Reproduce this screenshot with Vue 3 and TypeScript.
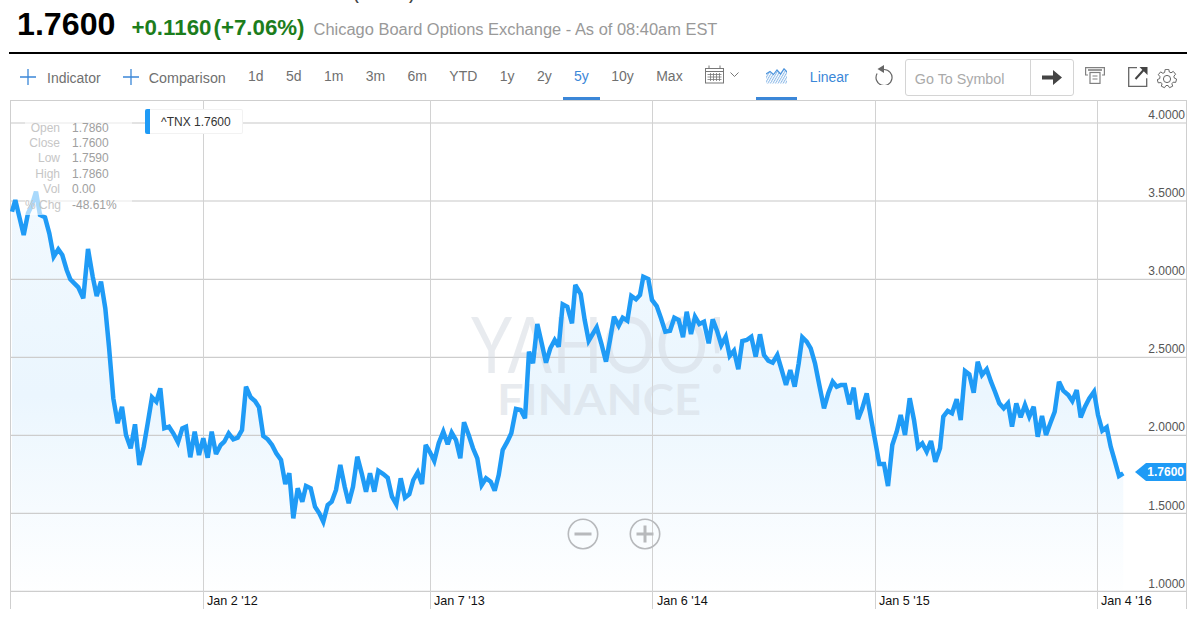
<script setup lang="ts">
const ranges = ['1d', '5d', '1m', '3m', '6m', 'YTD', '1y', '2y', '5y', '10y', 'Max']
const ohlc = [
  ['Open', '1.7860'],
  ['Close', '1.7600'],
  ['Low', '1.7590'],
  ['High', '1.7860'],
  ['Vol', '0.00'],
  ['% Chg', '-48.61%'],
]
const topLines = [123, 201]
const hLines = [279, 357, 435, 513, 591]
const vLines = [203.5, 430.5, 652.5, 875.5, 1097.5]
const yLabels = [
  ['4.0000', 119], ['3.5000', 197], ['3.0000', 275], ['2.5000', 353],
  ['2.0000', 431], ['1.5000', 510], ['1.0000', 588],
] as [string, number][]
const xLabels = [
  ["Jan 2 '12", 207], ["Jan 7 '13", 434], ["Jan 6 '14", 657], ["Jan 5 '15", 879], ["Jan 4 '16", 1101],
] as [string, number][]

type Seg = { ox: number; oy: number; p: number[] }
const segs: Seg[] = [
  { ox: 0, oy: 180, p: [36,95,46,60,58,110,71,165,84,100,96,75,108,35,120,105,135,112,148,160,161,230,175,208,187,225,200,270,211,298,235,322,250,355,264,207,278,290,290,348,303,305,316,385,327,500,340,655,353,730,366,680,378,765,392,805,405,733,418,855,431,800,443,730,456,652,469,665,481,625,493,745,507,740,520,760,534,787,547,745,558,740,571,832,584,755,597,825,610,775,623,833,635,755,648,822,662,795,673,785,686,760,700,778,713,773,726,750,738,620,752,652,765,663,777,682,790,768,803,778,816,795,829,820,843,840,856,912,868,880] },
  { ox: 280, oy: 260, p: [40,775,53,685,67,725,78,678,92,685,105,740,118,760,130,785,143,735,155,725,168,690,181,615,194,680,206,730,219,680,232,590,245,640,258,695,270,640,283,695,295,632,310,642,323,653,336,710,349,733,362,655,375,713,388,703,400,660,413,637,426,672,437,555,450,577,463,603,476,550,490,515,503,553,515,518,528,540,541,595,552,487,566,525,579,565,592,595,605,675,618,655,632,665,644,692,656,645,668,570,682,545,694,520,708,447,722,450,735,475,747,275,759,310,772,192,785,250,798,308,811,265,824,240,836,260] },
  { ox: 560, oy: 260, p: [8,133,22,140,36,190,46,75,62,102,74,180,86,242,110,202,124,250,138,305,150,240,162,170,176,197,188,173,202,182,214,108,228,118,240,105,250,50,265,57,276,120,290,138,303,175,316,215,330,212,343,173,356,180,369,232,380,155,393,222,405,170,418,192,432,185,446,250,458,178,471,212,484,255,497,230,509,288,522,272,535,328,547,243,560,240,574,230,587,290,600,223,612,285,625,302,638,308,652,285,665,330,678,375,691,330,704,380,716,310,727,232,740,245,752,265,765,310,778,375,792,445,805,400,818,365,830,380,843,375,855,375,868,433,881,383,894,478,907,445] },
  { ox: 860, oy: 340, p: [20,160,33,235,46,305,58,372,72,372,84,438,97,315,110,275,122,225,135,285,149,175,162,240,174,322,187,310,200,335,213,303,226,365,240,325,250,230,263,213,276,220,290,178,302,240,315,93,328,103,341,158,353,65,366,105,380,88,393,125,405,155,418,190,431,205,444,190,456,260,469,190,482,232,495,195,508,230,521,200,533,290,546,228,558,285,571,250,584,215,597,125,610,152,625,165,637,183,650,150,662,232,675,200,688,175,702,155,714,225,727,272,740,262,752,320,765,365,777,408,790,400] },
]
const pts: string[] = []
for (const s of segs) {
  for (let i = 0; i < s.p.length; i += 2) {
    pts.push(`${(s.ox + s.p[i] / 3).toFixed(1)},${(s.oy + s.p[i + 1] / 3).toFixed(1)}`)
  }
}
const line = pts.join(' ')
const area = `M12,608 L${pts.join(' L')} L1123.3,608 Z`
</script>

<template>
  <div class="page">
    <div class="clipped"><span>(^TNX)</span></div>
    <div class="quote">
      <span class="price">1.7600</span>
      <span class="change">+0.1160</span>
      <span class="pct">(+7.06%)</span>
      <span class="source">Chicago Board Options Exchange - As of 08:40am EST</span>
    </div>
    <div class="toolbar">
      <button class="add first">
        <svg width="16" height="16" viewBox="0 0 16 16"><path d="M8 0v16M0 8h16" stroke="#3b87d8" stroke-width="1.3" /></svg>
        <span>Indicator</span>
      </button>
      <button class="add second">
        <svg width="16" height="16" viewBox="0 0 16 16"><path d="M8 0v16M0 8h16" stroke="#3b87d8" stroke-width="1.3" /></svg>
        <span>Comparison</span>
      </button>
      <div class="ranges">
        <span v-for="r in ranges" :key="r" class="range" :class="{ active: r === '5y' }">{{ r }}</span>
      </div>
      <svg class="cal" width="19" height="19" viewBox="0 0 19 19" fill="none" stroke="#777" stroke-width="1">
        <rect x="0.5" y="3.5" width="18" height="14.5" />
        <path d="M0.5 6.5h18M4 .5v3M15 .5v3" />
        <path d="M2.5 9.5h14M2.5 12h14M2.5 14.5h14M5.5 8v8M8.5 8v8M11.5 8v8M14.5 8v8" stroke-width=".8" />
      </svg>
      <svg class="chev" width="9" height="5" viewBox="0 0 9 5" fill="none" stroke="#777"><path d="M.5.5l4 4 4-4" /></svg>
      <div class="mode">
        <svg width="21" height="16" viewBox="0 0 21 16">
          <defs>
            <pattern id="hatch" patternUnits="userSpaceOnUse" width="2.2" height="2.2" patternTransform="rotate(30)">
              <rect width="1" height="2.2" fill="#8fbbe8" />
            </pattern>
          </defs>
          <path d="M0 6l4-2.5L7.5 6.5 11 2l3.5 4L18 .8 21 4v11.5H0z" fill="url(#hatch)" />
          <path d="M0 6l4-2.5L7.5 6.5 11 2l3.5 4L18 .8 21 4" fill="none" stroke="#4d94dc" stroke-width="1.2" />
        </svg>
      </div>
      <span class="linear">Linear</span>
      <svg class="undo" width="18" height="21" viewBox="0 0 18 21" fill="none">
        <path d="M9 5.5a8 8 0 1 1-6.9 4" stroke="#666" stroke-width="1.2" />
        <path d="M9 1v8L2.5 5z" fill="#666" />
      </svg>
      <div class="search">
        <span class="placeholder">Go To Symbol</span>
        <span class="go">
          <svg width="20" height="15" viewBox="0 0 20 15"><path d="M0 5.6h11V0l9 7.5-9 7.5V9.4H0z" fill="#444" /></svg>
        </span>
      </div>
      <svg class="print" width="20" height="17" viewBox="0 0 20 17" fill="none" stroke="#808080" stroke-width="1.2">
        <path d="M3 8H.6V.6h18.8V8H17" />
        <path d="M3 3h14" stroke-width="1.6" />
        <rect x="5" y="5.5" width="10" height="10.9" />
        <path d="M7.5 9h5M7.5 12h5" />
      </svg>
      <svg class="share" width="20" height="21" viewBox="0 0 20 21" fill="none" stroke="#666" stroke-width="1.3">
        <path d="M9 1.6H.7v18.7h18v-8" />
        <path d="M7.5 13L16.5 3" stroke="#444" stroke-width="2" />
        <path d="M11.5 1h8v8z" fill="#444" stroke="none" />
      </svg>
      <svg class="gear" width="20" height="20" viewBox="0 0 20 20" fill="none" stroke="#666" stroke-width="1">
        <path d="M8.2.8h3.6l.5 2.6 1.7.8 2.3-1.4 2.3 2.8-1.7 2 .4 1.9 2.3 1-.9 3.3-2.6-.2-1.2 1.5.8 2.5-3.2 1.5-1.4-2.2H9l-1.5 2.2-3.2-1.5.8-2.5L3.9 14l-2.7.2L.3 11l2.4-1 .3-1.9-1.7-2 2.3-2.8 2.3 1.4 1.7-.8z" transform="translate(0 -.4)" />
        <circle cx="10" cy="10" r="3.6" />
      </svg>
    </div>

    <div class="chart">
      <svg class="plot" width="1177" height="509" viewBox="10 100 1177 509">
        <defs>
          <linearGradient id="areaFill" gradientUnits="userSpaceOnUse" x1="0" y1="190" x2="0" y2="600">
            <stop offset="0" stop-color="#e6f4fe" stop-opacity=".5" />
            <stop offset=".5" stop-color="#ebf6fe" />
            <stop offset="1" stop-color="#ffffff" />
          </linearGradient>
        </defs>
        <path :d="area" fill="url(#areaFill)" />
        <g stroke="#e3e3e3" stroke-width="2">
          <line v-for="y in topLines" :key="y" x1="11" x2="1186" :y1="y" :y2="y" />
        </g>
        <g stroke="#cdcdcd" stroke-width="1.3">
          <line v-for="y in hLines" :key="y" x1="11" x2="1186" :y1="y + 0.3" :y2="y + 0.3" />
        </g>
        <g stroke="#d2d2d2" stroke-width="1">
          <line v-for="x in vLines" :key="x" :x1="x" :x2="x" y1="100" y2="609" />
        </g>
        <g class="mark" fill="#d5dbe2" fill-opacity=".55">
          <text class="yahoo" x="471" y="373" textLength="255" lengthAdjust="spacingAndGlyphs">YAHOO!</text>
          <text class="finance" x="497" y="415" textLength="204" lengthAdjust="spacingAndGlyphs">FINANCE</text>
        </g>
        <polyline :points="line" fill="none" stroke="#1f9bf6" stroke-width="4.5" stroke-linejoin="miter" stroke-miterlimit="3" />
        <g class="ylabels">
          <text v-for="l in yLabels" :key="l[0]" x="1185" :y="l[1]" text-anchor="end">{{ l[0] }}</text>
        </g>
        <g class="xlabels">
          <text v-for="l in xLabels" :key="l[0]" :x="l[1]" y="605">{{ l[0] }}</text>
        </g>
      </svg>

      <div class="legend"><span class="swatch"></span><span class="legend-text">^TNX 1.7600</span></div>

      <div class="ohlc">
        <template v-for="row in ohlc" :key="row[0]">
          <span class="k">{{ row[0] }}</span>
          <span class="v">{{ row[1] }}</span>
        </template>
      </div>

      <div class="flag">1.7600</div>

      <svg class="zoom zoom-out" width="32" height="32" viewBox="0 0 32 32" fill="none" stroke="#b7b9bc">
        <circle cx="16" cy="16" r="14.7" stroke-width="1.6" />
        <path d="M7.5 16h17" stroke-width="3" />
      </svg>
      <svg class="zoom zoom-in" width="32" height="32" viewBox="0 0 32 32" fill="none" stroke="#b7b9bc">
        <circle cx="16" cy="16" r="14.7" stroke-width="1.6" />
        <path d="M7.5 16h17M16 7.5v17" stroke-width="3" />
      </svg>
    </div>
  </div>
</template>

<style>
html, body { margin: 0; background: #fff; }
</style>

<style scoped>
.page {
  position: relative;
  width: 1197px;
  height: 619px;
  overflow: hidden;
  background: #fff;
  font-family: "Liberation Sans", Arial, sans-serif;
}
.clipped {
  height: 3px;
  overflow: hidden;
  display: flex;
  align-items: flex-end;
  padding-left: 353px;
  font-size: 19.7px;
  line-height: 20px;
  color: #444;
}
.quote {
  height: 51px;
  margin: 0 10px 0 9px;
  padding: 1px 0 0 8px;
  box-sizing: border-box;
  border-bottom: 2px solid #000;
  display: flex;
  align-items: baseline;
}
.price { font-size: 32.2px; line-height: 40px; font-weight: bold; color: #000; }
.change { font-size: 22.3px; font-weight: bold; color: #1c7d1c; margin-left: 16px; }
.pct { font-size: 22.3px; font-weight: bold; color: #1c7d1c; margin-left: 2px; }
.source { font-size: 16.45px; color: #999; margin-left: 9px; }
.toolbar {
  height: 46px;
  display: flex;
  align-items: center;
  font-size: 14px;
  color: #707070;
}
.add {
  display: flex;
  align-items: center;
  border: 0;
  background: none;
  padding: 0;
  font: inherit;
  color: inherit;
}
.add span { padding-top: 1px; }
.first { margin-left: 20px; gap: 11px; }
.second { margin-left: 22px; gap: 10px; font-size: 14.3px; }
.ranges { display: flex; align-self: stretch; margin-left: 11px; }
.range {
  padding: 0 11.2px;
  display: flex;
  align-items: center;
  box-sizing: border-box;
  border-bottom: 3px solid transparent;
}
.range.active { color: #3b87d8; border-bottom-color: #3b87d8; }
.cal { margin-left: 11px; margin-top: -6px; }
.chev { margin-left: 6px; margin-top: -6px; }
.mode {
  align-self: stretch;
  width: 41px;
  margin-left: 17px;
  box-sizing: border-box;
  border-bottom: 3px solid #3b87d8;
  display: flex;
  align-items: center;
  justify-content: center;
}
.linear { color: #3b87d8; margin-left: 13px; width: 40px; margin-top: -1px; }
.undo { margin-left: 25px; margin-top: -6px; }
.search {
  width: 169px;
  height: 37px;
  margin-left: 12px;
  box-sizing: border-box;
  border: 1px solid #d4d4d4;
  border-radius: 3px;
  display: flex;
  align-items: center;
  justify-content: space-between;
  margin-top: 1px;
  font-size: 14.3px;
}
.placeholder { color: #aaa; margin-left: 9px; margin-top: 2px; }
.go {
  width: 43px;
  align-self: stretch;
  border-left: 1px solid #d4d4d4;
  display: flex;
  align-items: center;
  justify-content: center;
  box-sizing: border-box;
}
.print { margin-left: 11px; margin-top: -3px; }
.share { margin-left: 23px; margin-top: -2px; }
.gear { margin-left: 9px; margin-top: 4px; }
.chart {
  position: relative;
  width: 1177px;
  height: 509px;
  margin-left: 10px;
  box-sizing: border-box;
  border: 1px solid #cfcfcf;
  border-width: 1px 1px 0 1px;
}
.plot { position: absolute; left: -1px; top: -1px; display: block; }
.plot text { font-family: "Liberation Sans", Arial, sans-serif; }
.mark .yahoo { font-size: 78px; font-weight: 400; font-family: Lato, "Liberation Sans", sans-serif; }
.mark .finance { font-size: 42px; font-weight: 700; font-family: Lato, "Liberation Sans", sans-serif; }
.ylabels { font-size: 12px; fill: #555; }
.xlabels { font-size: 12.6px; fill: #111; }
.legend {
  position: absolute;
  left: 134px;
  top: 8px;
  width: 98px;
  height: 25px;
  box-sizing: border-box;
  background: #fff;
  border: 1px solid #f2f2f2;
  border-left: 0;
  border-radius: 2px;
  display: flex;
  align-items: center;
  font-size: 12px;
  color: #333;
}
.swatch { width: 5px; align-self: stretch; background: #1f9bf6; border-radius: 2px 0 0 2px; margin-top: -1px; margin-bottom: -1px; }
.legend-text { margin-left: 11px; }
.ohlc {
  position: absolute;
  left: 14px;
  top: 19px;
  width: 107px;
  height: 95px;
  box-sizing: border-box;
  background: rgba(255, 255, 255, .62);
  display: grid;
  grid-template-columns: 35px 1fr;
  column-gap: 12px;
  grid-auto-rows: 15.4px;
  align-content: start;
  font-size: 12px;
  align-items: center;
}
.k { text-align: right; color: #c6c6c6; white-space: nowrap; }
.v { color: #a0a0a0; }
.flag {
  position: absolute;
  right: 0;
  top: 362px;
  width: 40px;
  height: 18px;
  background: #1f9bf6;
  color: #fff;
  font-size: 12px;
  font-weight: bold;
  line-height: 18px;
  text-align: right;
  padding-right: 2px;
  box-sizing: border-box;
}
.flag::before {
  content: "";
  position: absolute;
  left: -11px;
  top: 0;
  border-style: solid;
  border-width: 9px 11px 9px 0;
  border-color: transparent #1f9bf6 transparent transparent;
}
.zoom { position: absolute; top: 417px; }
.zoom-out { left: 556px; }
.zoom-in { left: 618px; }
</style>
